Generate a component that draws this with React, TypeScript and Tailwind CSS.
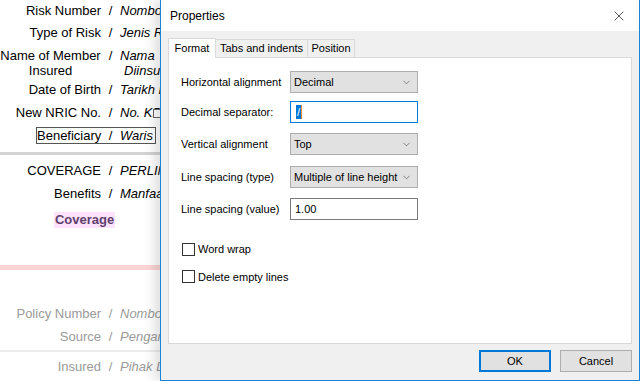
import { X, ChevronDown } from "lucide-react";

const bg = "font-['Liberation_Sans',Arial,sans-serif] text-[13px]";
const ui = "font-['Liberation_Sans',Arial,sans-serif] text-[11px]";

function Row({ label, value, h, muted }: { label: string; value: string; h: string; muted?: boolean }) {
  return (
    <div className={`flex items-center ${h} ${muted ? "text-[#9a9a9a]" : "text-black"}`}>
      <span className="w-[101px] shrink-0 text-right whitespace-nowrap">{label}</span>
      <span className="w-[19px] shrink-0 text-center">/</span>
      <span className="italic whitespace-nowrap">{value}</span>
    </div>
  );
}

function Select({ value }: { value: string }) {
  return (
    <div className="flex h-[22px] w-[128px] items-center justify-between border border-[#adadad] bg-[#e1e1e1] pl-[3px] pr-[5px]">
      <span className="whitespace-nowrap">{value}</span>
      <ChevronDown size={11} strokeWidth={1.3} className="shrink-0 text-[#444]" />
    </div>
  );
}

function Field({ label, children, mt }: { label: string; children: React.ReactNode; mt: string }) {
  return (
    <div className={`flex items-center ${mt}`}>
      <span className="w-[109px] whitespace-nowrap">{label}</span>
      {children}
    </div>
  );
}

function Check({ label, mt }: { label: string; mt: string }) {
  return (
    <label className={`flex items-center ${mt} ml-[1px]`}>
      <span className="h-[13px] w-[13px] border border-[#333] bg-white" />
      <span className="ml-[3px]">{label}</span>
    </label>
  );
}

export default function App() {
  return (
    <div className={`relative h-[381px] w-[640px] overflow-hidden bg-white ${bg}`}>
      {/* page behind the dialog */}
      <div className="flex w-[160px] flex-col overflow-hidden">
        <Row label="Risk Number" value="Nombor Risiko" h="h-[21px]" />
        <Row label="Type of Risk" value="Jenis Risiko" h="h-[24px]" />
        <div className="flex h-[36px] items-center leading-[15px]">
          <span className="w-[101px] shrink-0 text-center">Name of Member Insured</span>
          <span className="w-[19px] shrink-0 self-start pt-[3px] text-center">/</span>
          <span className="flex flex-col whitespace-nowrap italic">
            <span>Nama</span>
            <span className="pl-[4px]">Diinsuranskan</span>
          </span>
        </div>
        <Row label="Date of Birth" value="Tarikh Lahir" h="h-[18px]" />
        <div className="relative">
          <Row label="New NRIC No." value="No. KP Baru" h="h-[28px]" />
          <span className="absolute left-[153px] top-[10px] h-[9px] w-[10px] border border-[#666] bg-white" />
        </div>
        <div className="ml-[36px] flex h-[17px] w-[120px] items-center border border-[#555]">
          <span className="w-[64px] text-right">Beneficiary</span>
          <span className="w-[19px] text-center">/</span>
          <span className="italic">Waris</span>
        </div>
        <div className="mt-[8px] h-[3px] bg-[#d3d3d3]" />
        <Row label="COVERAGE" value="PERLINDUNGAN" h="mt-[5px] h-[22px]" />
        <Row label="Benefits" value="Manfaat" h="h-[24px]" />
        <div className="ml-[54px] mt-[6px] flex h-[16px] w-[61px] items-center justify-center bg-[#fde2fb] font-bold text-[#5f3f6e]">
          Coverage
        </div>
        <div className="mt-[37px] h-[5px] bg-[#fcd4d4]" />
        <Row label="Policy Number" value="Nombor Polisi" h="mt-[33px] h-[22px]" muted />
        <Row label="Source" value="Pengarah" h="h-[24px]" muted />
        <div className="mt-[1px] h-[2px] bg-[#ececec]" />
        <Row label="Insured" value="Pihak Diinsuranskan" h="mt-[4px] h-[22px]" muted />
      </div>

      {/* Properties dialog */}
      <div className={`absolute left-[160px] top-0 flex h-[381px] w-[480px] flex-col border border-t-0 border-[#1883d7] bg-[#f0f0f0] text-black shadow-[-6px_0_10px_rgba(0,0,0,0.12)] ${ui}`}>
        <div className="flex h-[31px] shrink-0 items-center justify-between bg-white pl-[9px] pr-[12px] text-[12px]">
          <span>Properties</span>
          <X size={16} strokeWidth={1} />
        </div>
        <div className="flex flex-1 flex-col px-[7px] pt-[7px]">
          <div className="flex h-[19px] items-end">
            <div className="relative z-10 -mb-px flex h-[20px] w-[48px] items-center justify-center border border-b-0 border-[#d9d9d9] bg-white">
              Format
            </div>
            <div className="flex h-[18px] w-[92px] items-center justify-center border border-l-0 border-b-0 border-[#d9d9d9]">
              Tabs and indents
            </div>
            <div className="flex h-[18px] w-[47px] items-center justify-center border border-l-0 border-b-0 border-[#d9d9d9]">
              Position
            </div>
          </div>
          <div className="flex h-[287px] w-[464px] flex-col border border-[#d9d9d9] bg-white pl-[12px] pt-[13px]">
            <Field label="Horizontal alignment" mt="">
              <Select value="Decimal" />
            </Field>
            <Field label="Decimal separator:" mt="mt-[8px]">
              <div className="flex h-[22px] w-[128px] items-center border border-[#0078d7] bg-white pl-[5px]">
                <span className="flex h-[14px] items-center border-r border-[#f08a24] bg-[#0078d7] px-[1px] text-white">/</span>
              </div>
            </Field>
            <Field label="Vertical alignment" mt="mt-[10px]">
              <Select value="Top" />
            </Field>
            <Field label="Line spacing (type)" mt="mt-[11px]">
              <Select value="Multiple of line height" />
            </Field>
            <Field label="Line spacing (value)" mt="mt-[10px]">
              <div className="flex h-[22px] w-[128px] items-center border border-[#7a7a7a] bg-white pl-[4px]">1.00</div>
            </Field>
            <Check label="Word wrap" mt="mt-[21px]" />
            <Check label="Delete empty lines" mt="mt-[11px]" />
          </div>
          <div className="mt-[6px] flex justify-end gap-[9px]">
            <button className="flex h-[22px] w-[72px] items-center justify-center border-2 border-[#0078d7] bg-[#e1e1e1]">OK</button>
            <button className="flex h-[22px] w-[72px] items-center justify-center border border-[#adadad] bg-[#e1e1e1]">Cancel</button>
          </div>
        </div>
      </div>
    </div>
  );
}
